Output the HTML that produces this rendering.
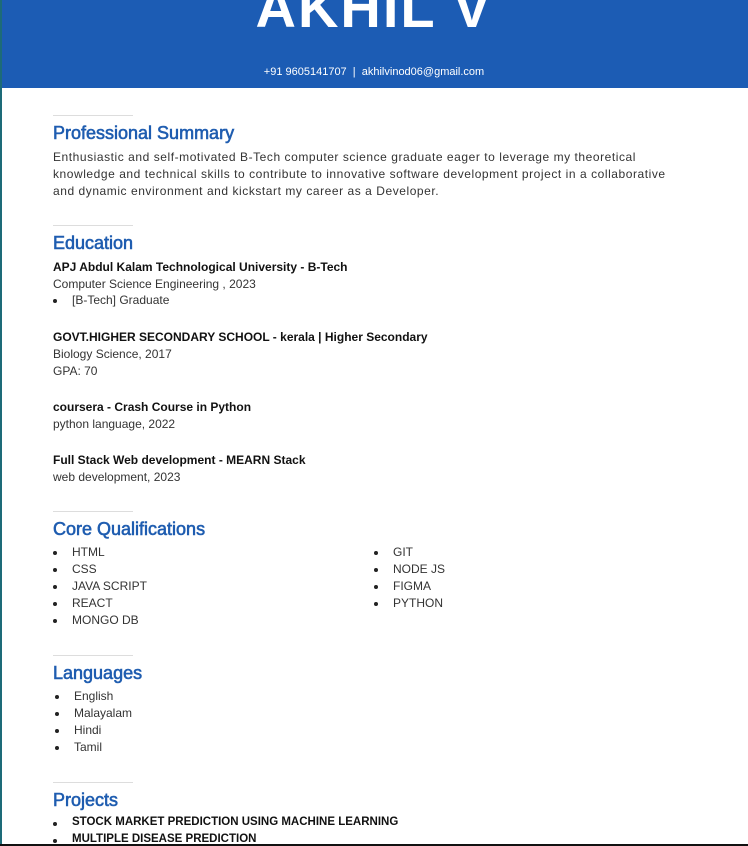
<!DOCTYPE html>
<html><head><meta charset="utf-8"><style>
*{margin:0;padding:0;box-sizing:border-box}
body{width:748px;height:846px;overflow:hidden;background:#fff;font-family:"Liberation Sans",sans-serif;color:#333;position:relative}
.lb{position:absolute;left:0;top:0;width:2px;height:846px;background:#1d6b78}
.bb{position:absolute;left:0;top:844px;width:748px;height:2px;background:#111}
.hdr{position:absolute;left:0;top:0;width:748px;height:88px;background:#1c5cb4}
.name{position:absolute;left:0;width:748px;text-align:center;top:-25px;font-size:56px;font-weight:bold;color:#fff;letter-spacing:2px}
.ct{position:absolute;left:0;width:748px;text-align:center;top:66px;font-size:11px;color:#fff}
.a{position:absolute;left:53px;font-size:12px;line-height:17px}
.rule{position:absolute;left:53px;width:80px;height:1px;background:#ddd}
h2{position:absolute;left:53px;font-size:18px;color:#1f5db0;font-weight:normal;-webkit-text-stroke:0.6px #1f5db0}
b{color:#111}
.li{position:absolute;font-size:12px}
.li:before{content:"";position:absolute;left:-19px;top:6px;width:4px;height:4px;border-radius:50%;background:#222}
</style></head><body>
<div class="hdr"><div class="name">AKHIL V</div><div class="ct">+91 9605141707 &nbsp;|&nbsp; akhilvinod06@gmail.com</div></div>
<div class="lb"></div>

<div class="rule" style="top:115px"></div>
<h2 style="top:123px">Professional Summary</h2>
<div class="a" style="top:149px;width:680px;letter-spacing:0.55px;white-space:nowrap">Enthusiastic and self-motivated B-Tech computer science graduate eager to leverage my theoretical<br>knowledge and technical skills to contribute to innovative software development project in a collaborative<br>and dynamic environment and kickstart my career as a Developer.</div>

<div class="rule" style="top:225px"></div>
<h2 style="top:233px">Education</h2>
<div class="a" style="top:259px"><b>APJ Abdul Kalam Technological University - B-Tech</b><br>Computer Science Engineering , 2023</div>
<div class="li" style="left:72px;top:293px">[B-Tech] Graduate</div>
<div class="a" style="top:329px"><b>GOVT.HIGHER SECONDARY SCHOOL - kerala | Higher Secondary</b><br>Biology Science, 2017<br>GPA: 70</div>
<div class="a" style="top:399px"><b>coursera - Crash Course in Python</b><br>python language, 2022</div>
<div class="a" style="top:452px"><b>Full Stack Web development - MEARN Stack</b><br>web development, 2023</div>

<div class="rule" style="top:511px"></div>
<h2 style="top:519px">Core Qualifications</h2>
<div class="li" style="left:72px;top:545px">HTML</div>
<div class="li" style="left:72px;top:562px">CSS</div>
<div class="li" style="left:72px;top:579px">JAVA SCRIPT</div>
<div class="li" style="left:72px;top:596px">REACT</div>
<div class="li" style="left:72px;top:613px">MONGO DB</div>
<div class="li" style="left:393px;top:545px">GIT</div>
<div class="li" style="left:393px;top:562px">NODE JS</div>
<div class="li" style="left:393px;top:579px">FIGMA</div>
<div class="li" style="left:393px;top:596px">PYTHON</div>

<div class="rule" style="top:655px"></div>
<h2 style="top:663px">Languages</h2>
<div class="li" style="left:74px;top:689px">English</div>
<div class="li" style="left:74px;top:706px">Malayalam</div>
<div class="li" style="left:74px;top:723px">Hindi</div>
<div class="li" style="left:74px;top:740px">Tamil</div>

<div class="rule" style="top:782px"></div>
<h2 style="top:790px">Projects</h2>
<div class="li" style="left:72px;top:816px;font-size:11.5px"><b>STOCK MARKET PREDICTION USING MACHINE LEARNING</b></div>
<div class="li" style="left:72px;top:833px;font-size:11.5px"><b>MULTIPLE DISEASE PREDICTION</b></div>
<div class="bb"></div>
</body></html>
